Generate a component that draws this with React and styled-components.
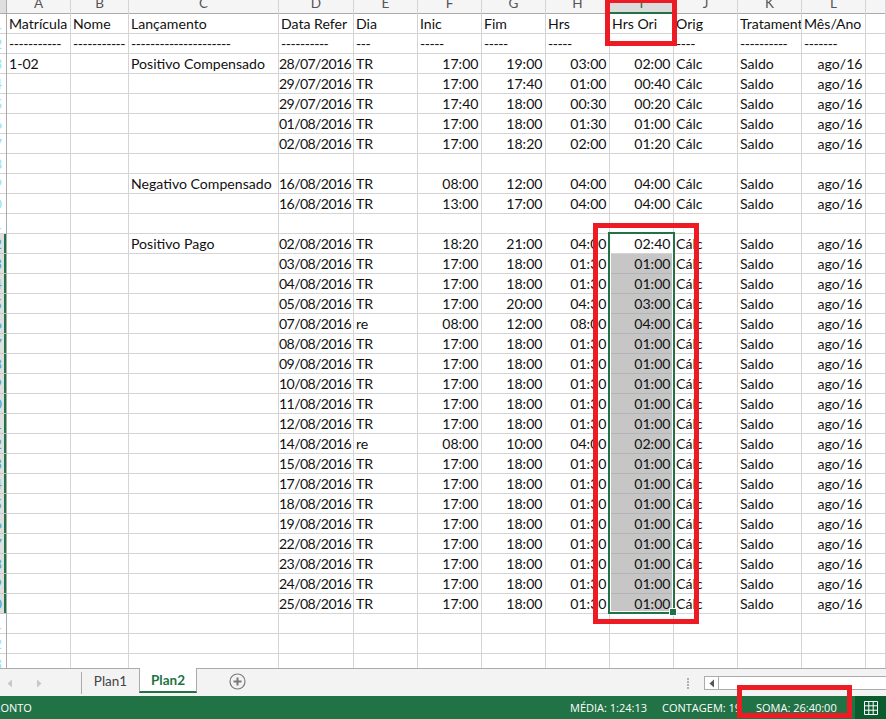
import React from "react";
import styled, { createGlobalStyle } from "styled-components";

const columnWidths = [64, 58, 150, 75, 64, 64, 64, 64, 64, 64, 64, 64];
const columnLetters = ["A", "B", "C", "D", "E", "F", "G", "H", "I", "J", "K", "L"];
const gridColumns = `${columnWidths.map((w) => `${w}px`).join(" ")} 20px`;

const paid = [
  ["03/08/2016", "TR", "17:00", "18:00", "01:30", "01:00"],
  ["04/08/2016", "TR", "17:00", "18:00", "01:30", "01:00"],
  ["05/08/2016", "TR", "17:00", "20:00", "04:30", "03:00"],
  ["07/08/2016", "re", "08:00", "12:00", "08:00", "04:00"],
  ["08/08/2016", "TR", "17:00", "18:00", "01:30", "01:00"],
  ["09/08/2016", "TR", "17:00", "18:00", "01:30", "01:00"],
  ["10/08/2016", "TR", "17:00", "18:00", "01:30", "01:00"],
  ["11/08/2016", "TR", "17:00", "18:00", "01:30", "01:00"],
  ["12/08/2016", "TR", "17:00", "18:00", "01:30", "01:00"],
  ["14/08/2016", "re", "08:00", "10:00", "04:00", "02:00"],
  ["15/08/2016", "TR", "17:00", "18:00", "01:30", "01:00"],
  ["17/08/2016", "TR", "17:00", "18:00", "01:30", "01:00"],
  ["18/08/2016", "TR", "17:00", "18:00", "01:30", "01:00"],
  ["19/08/2016", "TR", "17:00", "18:00", "01:30", "01:00"],
  ["22/08/2016", "TR", "17:00", "18:00", "01:30", "01:00"],
  ["23/08/2016", "TR", "17:00", "18:00", "01:30", "01:00"],
  ["24/08/2016", "TR", "17:00", "18:00", "01:30", "01:00"],
  ["25/08/2016", "TR", "17:00", "18:00", "01:30", "01:00"],
];

const rows = [
  { a: "1-02", c: "Positivo Compensado", d: ["28/07/2016", "TR", "17:00", "19:00", "03:00", "02:00"] },
  { d: ["29/07/2016", "TR", "17:00", "17:40", "01:00", "00:40"] },
  { d: ["29/07/2016", "TR", "17:40", "18:00", "00:30", "00:20"] },
  { d: ["01/08/2016", "TR", "17:00", "18:00", "01:30", "01:00"] },
  { d: ["02/08/2016", "TR", "17:00", "18:20", "02:00", "01:20"] },
  {},
  { c: "Negativo Compensado", d: ["16/08/2016", "TR", "08:00", "12:00", "04:00", "04:00"] },
  { d: ["16/08/2016", "TR", "13:00", "17:00", "04:00", "04:00"] },
  {},
  { c: "Positivo Pago", d: ["02/08/2016", "TR", "18:20", "21:00", "04:00", "02:40"], first: true },
  ...paid.map((d) => ({ d, selected: true })),
  {},
  {},
  {},
];

const GlobalStyle = createGlobalStyle`
  html, body {
    margin: 0;
    padding: 0;
    background: #fff;
  }
  body {
    font-family: "Lato", "Liberation Sans", sans-serif;
    color: #111;
  }
`;

const Window = styled.div`
  position: relative;
  width: 886px;
  height: 719px;
  overflow: hidden;
  display: flex;
  flex-direction: column;
`;

const Sheet = styled.div`
  flex: 1;
  min-height: 0;
  overflow: hidden;
  display: flex;
`;

const RowHeaders = styled.div`
  flex: 0 0 7px;
  width: 7px;
  min-width: 0;
  overflow: hidden;
  display: flex;
  flex-direction: column;
  border-right: 1px solid #ababab;
  box-sizing: border-box;
  background: #fff;
`;

const HeaderCorner = styled.div`
  flex: 0 0 14px;
  background: #dedede;
  border-bottom: 1px solid #ababab;
  box-sizing: border-box;
`;

const RowHeader = styled.div`
  flex: 0 0 20px;
  box-sizing: border-box;
  overflow: hidden;
  direction: rtl;
  padding-right: 4px;
  font-size: 14px;
  line-height: 19px;
  color: ${({ $on }) => ($on ? "#3fa9d8" : "#9adff2")};
  border-bottom: 1px solid ${({ $on }) => ($on ? "#c4c4c4" : "#d4d4d4")};
  background: ${({ $on }) => ($on ? "#e0e0e0" : "#fff")};
  box-shadow: ${({ $on }) => ($on ? "inset -2px 0 0 #217346" : "none")};
`;

const Grid = styled.div`
  display: flex;
  flex-direction: column;
`;

const ColumnStrip = styled.div`
  display: grid;
  grid-template-columns: ${gridColumns};
  height: 14px;
  background: #f5f5f5;
`;

const ColumnLetter = styled.div`
  height: 14px;
  overflow: hidden;
  text-align: center;
  font-size: 13.5px;
  line-height: 7px;
  color: ${({ $on }) => ($on ? "#217346" : "#555")};
  box-sizing: border-box;
  border-right: 1px solid #d4d4d4;
  background: ${({ $on }) => ($on ? "#dcdcdc" : "transparent")};
  box-shadow: ${({ $on }) => ($on ? "inset 0 -2px 0 #217346" : "inset 0 -1px 0 #ababab")};
`;

const Row = styled.div`
  display: grid;
  grid-template-columns: ${gridColumns};
  height: 20px;
`;

const Cell = styled.div`
  box-sizing: border-box;
  height: 20px;
  padding: ${({ $right }) => ($right ? "0 2.5px 0 0" : "0 0 0 2px")};
  font-size: 14.1px;
  line-height: 19px;
  letter-spacing: ${({ $date, $dash }) => ($date ? "-0.6px" : $dash ? "-0.5px" : "normal")};
  white-space: nowrap;
  overflow: ${({ $clip }) => ($clip ? "hidden" : "visible")};
  text-align: ${({ $right }) => ($right ? "right" : "left")};
  color: #111;
  background: ${({ $selected }) => ($selected ? "#c6c6c6" : "#fff")};
  border-right: 1px solid #d4d4d4;
  border-bottom: 1px solid ${({ $selected }) => ($selected ? "#b4b4b4" : "#d4d4d4")};
`;

const SelectionBox = styled.div`
  position: absolute;
  left: 608px;
  top: 232px;
  width: 67px;
  height: 382px;
  box-sizing: border-box;
  border: 2px solid #217346;
  outline: 1px solid #fff;
  outline-offset: -3px;
`;

const FillHandle = styled.div`
  position: absolute;
  right: -4px;
  bottom: -4px;
  width: 6px;
  height: 6px;
  background: #217346;
  border: 1px solid #fff;
`;

const Annotation = styled.div`
  position: absolute;
  box-sizing: border-box;
  border: 5px solid #ed1c24;
  left: ${({ $x }) => $x}px;
  top: ${({ $y }) => $y}px;
  width: ${({ $w }) => $w}px;
  height: ${({ $h }) => $h}px;
`;

const TabBar = styled.div`
  flex: 0 0 28px;
  box-sizing: border-box;
  display: flex;
  align-items: flex-start;
  background: #f3f3f3;
  border-top: 1px solid #ababab;
`;

const ArrowSlot = styled.div`
  width: 82px;
  height: 22px;
  display: flex;
  align-items: center;
  gap: 23px;
  padding-left: 7px;
  box-sizing: border-box;
  border-right: 1px solid #ababab;
  margin-top: 3px;
`;

const SheetTab = styled.div`
  box-sizing: border-box;
  height: ${({ $active }) => ($active ? "25px" : "23px")};
  width: ${({ $active }) => ($active ? "58px" : "57px")};
  display: flex;
  align-items: center;
  justify-content: center;
  font-size: 13.5px;
  font-weight: ${({ $active }) => ($active ? 700 : 400)};
  color: ${({ $active }) => ($active ? "#217346" : "#444")};
  background: ${({ $active }) => ($active ? "#fff" : "transparent")};
  border-left: ${({ $active }) => ($active ? "1px solid #ababab" : "none")};
  border-right: ${({ $active }) => ($active ? "1px solid #ababab" : "none")};
  border-bottom: ${({ $active }) => ($active ? "2px solid #217346" : "none")};
  margin-top: ${({ $active }) => ($active ? "-1px" : "0")};
`;

const AddSheet = styled.div`
  margin: 4px 0 0 32px;
  display: flex;
`;

const ScrollArea = styled.div`
  margin-left: auto;
  display: flex;
  align-items: center;
  height: 22px;
  margin-top: 3px;
`;

const SplitDots = styled.div`
  display: flex;
  flex-direction: column;
  gap: 1px;
  margin-right: 15px;
`;

const Dot = styled.span`
  width: 2px;
  height: 2px;
  background: #b0b0b0;
`;

const ScrollButton = styled.div`
  width: 15px;
  height: 14px;
  box-sizing: border-box;
  border: 1px solid #ababab;
  background: #fff;
  display: flex;
  align-items: center;
  justify-content: center;
`;

const ScrollTrack = styled.div`
  width: 167px;
  height: 14px;
  box-sizing: border-box;
  background: #fff;
  border-top: 1px solid #ababab;
  border-bottom: 1px solid #ababab;
`;

const StatusBar = styled.div`
  flex: 0 0 23px;
  display: flex;
  align-items: center;
  background: #217346;
  color: #fff;
  font-family: "Open Sans", "Liberation Sans", sans-serif;
  font-size: 11px;
  white-space: nowrap;
`;

const ReadyLabel = styled.div`
  margin-left: -13px;
`;

const StatusStats = styled.div`
  margin-left: auto;
  display: flex;
  height: 100%;
  align-items: center;
`;

const Stat = styled.div`
  width: ${({ $w }) => $w}px;
  overflow: hidden;
`;

const ViewButton = styled.div`
  width: 31px;
  height: 100%;
  display: flex;
  align-items: center;
  justify-content: center;
  background: #0a5c2f;
`;

const Triangle = ({ dir, color }) => (
  <svg width="6" height="9" viewBox="0 0 6 9">
    <path d={dir === "left" ? "M5 0.5V8.5L0.5 4.5Z" : "M1 0.5V8.5L5.5 4.5Z"} fill={color} />
  </svg>
);

const DataRow = ({ row }) => {
  const d = row.d || ["", "", "", "", "", ""];
  return (
    <Row>
      <Cell>{row.a}</Cell>
      <Cell />
      <Cell>{row.c}</Cell>
      <Cell $right $date>{d[0]}</Cell>
      <Cell>{d[1]}</Cell>
      <Cell $right>{d[2]}</Cell>
      <Cell $right>{d[3]}</Cell>
      <Cell $right>{d[4]}</Cell>
      <Cell $right $selected={row.selected}>{d[5]}</Cell>
      <Cell>{row.d ? "Cálc" : ""}</Cell>
      <Cell>{row.d ? "Saldo" : ""}</Cell>
      <Cell $right>{row.d ? "ago/16" : ""}</Cell>
      <Cell />
    </Row>
  );
};

export default function App() {
  return (
    <>
      <GlobalStyle />
      <Window>
        <Sheet>
          <RowHeaders>
            <HeaderCorner />
            <RowHeader>1</RowHeader>
            <RowHeader>2</RowHeader>
            {rows.map((row, i) => (
              <RowHeader key={i} $on={row.selected || row.first}>{i + 3}</RowHeader>
            ))}
          </RowHeaders>
          <Grid>
            <ColumnStrip>
              {columnLetters.map((l) => (
                <ColumnLetter key={l} $on={l === "I"}>{l}</ColumnLetter>
              ))}
              <ColumnLetter />
            </ColumnStrip>
            <Row>
              <Cell>Matrícula</Cell>
              <Cell>Nome</Cell>
              <Cell>Lançamento</Cell>
              <Cell>Data Refer</Cell>
              <Cell>Dia</Cell>
              <Cell>Inic</Cell>
              <Cell>Fim</Cell>
              <Cell>Hrs</Cell>
              <Cell>Hrs Ori</Cell>
              <Cell>Orig</Cell>
              <Cell $clip>Tratamento</Cell>
              <Cell>Mês/Ano</Cell>
              <Cell />
            </Row>
            <Row>
              <Cell $dash>-----------</Cell>
              <Cell $dash>-----------</Cell>
              <Cell $dash>---------------------</Cell>
              <Cell $dash>----------</Cell>
              <Cell $dash>---</Cell>
              <Cell $dash>-----</Cell>
              <Cell $dash>-----</Cell>
              <Cell $dash>-----</Cell>
              <Cell $dash>-----</Cell>
              <Cell $dash>----</Cell>
              <Cell $dash>----------</Cell>
              <Cell $dash>-------</Cell>
              <Cell />
            </Row>
            {rows.map((row, i) => (
              <DataRow key={i} row={row} />
            ))}
          </Grid>
        </Sheet>
        <TabBar>
          <ArrowSlot>
            <Triangle dir="left" color="#c8c8c8" />
            <Triangle dir="right" color="#c8c8c8" />
          </ArrowSlot>
          <SheetTab>Plan1</SheetTab>
          <SheetTab $active>Plan2</SheetTab>
          <AddSheet>
            <svg width="17" height="17" viewBox="0 0 17 17">
              <circle cx="8.5" cy="8.5" r="7.5" fill="none" stroke="#7a7a7a" strokeWidth="1.2" />
              <path d="M8.5 4.5V12.5M4.5 8.5H12.5" stroke="#7a7a7a" strokeWidth="2" />
            </svg>
          </AddSheet>
          <ScrollArea>
            <SplitDots>
              <Dot />
              <Dot />
              <Dot />
              <Dot />
            </SplitDots>
            <ScrollButton>
              <Triangle dir="left" color="#555" />
            </ScrollButton>
            <ScrollTrack />
          </ScrollArea>
        </TabBar>
        <StatusBar>
          <ReadyLabel>PRONTO</ReadyLabel>
          <StatusStats>
            <Stat $w={92}>MÉDIA: 1:24:13</Stat>
            <Stat $w={94}>CONTAGEM: 19</Stat>
            <Stat $w={99}>SOMA: 26:40:00</Stat>
            <ViewButton>
              <svg width="14" height="14" viewBox="0 0 14 14">
                <path d="M0.5 0.5H13.5V13.5H0.5ZM0.5 4.8H13.5M0.5 9.2H13.5M4.8 0.5V13.5M9.2 0.5V13.5" fill="none" stroke="#fff" strokeWidth="1" />
              </svg>
            </ViewButton>
          </StatusStats>
        </StatusBar>
        <SelectionBox>
          <FillHandle />
        </SelectionBox>
        <Annotation $x={605} $y={-2} $w={72} $h={48} />
        <Annotation $x={593} $y={223} $w={106} $h={401} />
        <Annotation $x={737} $y={685} $w={115} $h={33} />
      </Window>
    </>
  );
}
